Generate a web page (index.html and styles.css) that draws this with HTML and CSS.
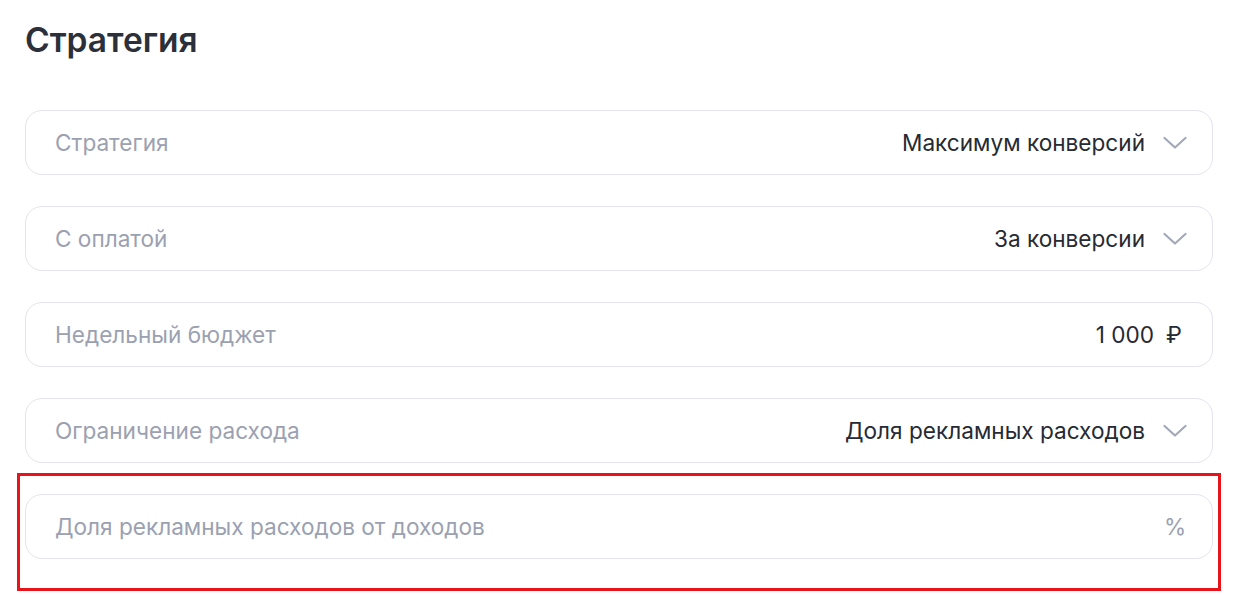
FILE: index.html
```html
<!DOCTYPE html>
<html lang="ru">
<head>
<meta charset="utf-8">
<link rel="stylesheet" href="styles.css">
</head>
<body>
<div class="page">
  <h1 class="title">Стратегия</h1>
  <div class="fields">
    <div class="field">
      <span class="label">Стратегия</span>
      <span class="value">Максимум конверсий</span>
      <svg class="chevron" width="24" height="14" viewBox="0 0 24 14"><path d="M1.5 2 L12 11.5 L22.5 2" fill="none" stroke="#a3a9b8" stroke-width="2.2" stroke-linecap="round" stroke-linejoin="round"/></svg>
    </div>
    <div class="field">
      <span class="label">С оплатой</span>
      <span class="value">За конверсии</span>
      <svg class="chevron" width="24" height="14" viewBox="0 0 24 14"><path d="M1.5 2 L12 11.5 L22.5 2" fill="none" stroke="#a3a9b8" stroke-width="2.2" stroke-linecap="round" stroke-linejoin="round"/></svg>
    </div>
    <div class="field">
      <span class="label">Недельный бюджет</span>
      <span class="value">1 000</span>
      <span class="unit unit-dark">₽</span>
    </div>
    <div class="field">
      <span class="label">Ограничение расхода</span>
      <span class="value">Доля рекламных расходов</span>
      <svg class="chevron" width="24" height="14" viewBox="0 0 24 14"><path d="M1.5 2 L12 11.5 L22.5 2" fill="none" stroke="#a3a9b8" stroke-width="2.2" stroke-linecap="round" stroke-linejoin="round"/></svg>
    </div>
    <div class="field field-marked">
      <span class="label">Доля рекламных расходов от доходов</span>
      <span class="value"></span>
      <span class="unit">%</span>
      <div class="highlight"></div>
    </div>
  </div>
</div>
</body>
</html>
```

FILE: styles.css
```css
html, body {
  margin: 0;
  padding: 0;
  background: #ffffff;
}

body {
  font-family: Inter, "Noto Sans", sans-serif;
  color: #2b303b;
}

.page {
  padding: 0 29px 60px 25px;
}

.title {
  margin: 0;
  padding-top: 20px;
  font-size: 33.5px;
  line-height: 40px;
  font-weight: 600;
  color: #2b303b;
}

.fields {
  margin-top: 50px;
  display: flex;
  flex-direction: column;
  gap: 31px;
}

.field {
  position: relative;
  height: 65px;
  box-sizing: border-box;
  border: 1px solid #e3e4ee;
  border-radius: 17px;
  display: flex;
  align-items: center;
  padding: 0 25px 0 29px;
  font-size: 22.6px;
}

.label {
  color: #9ba1b1;
  flex: 1;
  white-space: nowrap;
}

.value {
  color: #262a33;
  white-space: nowrap;
}

.chevron {
  margin-left: 18px;
  flex: none;
}

.unit {
  margin-left: 10px;
  color: #9ba1b1;
  width: 20px;
  text-align: center;
  margin-right: 3px;
}

.unit-dark {
  color: #262a33;
}

.highlight {
  position: absolute;
  top: -22px;
  left: -9px;
  right: -9px;
  bottom: -33px;
  border: 3px solid #e8141b;
  pointer-events: none;
}
```
